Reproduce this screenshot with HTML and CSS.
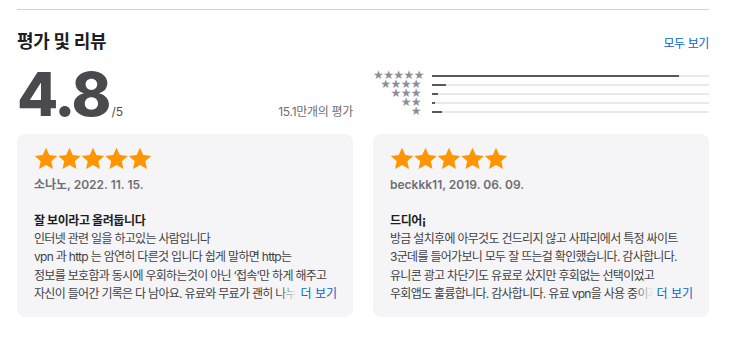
FILE: index.html
```html
<!DOCTYPE html>
<html>
<head>
	<title>평가 및 리뷰</title>
	<meta name="viewport" content="width=device-width">
	<link rel="stylesheet" href="styles.css">
</head>
<body>
	<section class="ratings">
		<div class="head">
			<h2>평가 및 리뷰</h2>
			<a class="all" href="#">모두 보기</a>
		</div>

		<div class="summary">
			<div class="score">
				<div class="avg"><span class="num">4.8</span><span class="of">/5</span></div>
				<div class="count">15.1만개의 평가</div>
			</div>
			<div class="hist">
				<div class="row"><span class="lbl">★★★★★</span><span class="bar"><i style="width:89%"></i></span></div>
				<div class="row"><span class="lbl">★★★★</span><span class="bar"><i style="width:5%"></i></span></div>
				<div class="row"><span class="lbl">★★★</span><span class="bar"><i style="width:2%"></i></span></div>
				<div class="row"><span class="lbl">★★</span><span class="bar"><i style="width:1%"></i></span></div>
				<div class="row"><span class="lbl">★</span><span class="bar"><i style="width:3.5%"></i></span></div>
			</div>
		</div>

		<div class="cards">
			<div class="card">
				<svg class="stars" width="118" height="24" viewBox="0 0 118 24">
					<defs>
						<path id="st" d="M12 0.8l3.3 7.3 7.9 0.8-5.9 5.3 1.7 7.8L12 18l-7 4 1.7-7.8L0.8 8.9l7.9-0.8z"/>
					</defs>
					<use href="#st" x="0"/><use href="#st" x="23.5"/><use href="#st" x="47"/><use href="#st" x="70.5"/><use href="#st" x="94"/>
				</svg>
				<div class="by">소나노, 2022. 11. 15.</div>
				<div class="title">잘 보이라고 올려둡니다</div>
				<div class="body">
					<div>인터넷 관련 일을 하고있는 사람입니다</div>
					<div>vpn 과 http 는 암연히 다른것 입니다 쉽게 말하면 http는</div>
					<div>정보를 보호함과 동시에 우회하는것이 아닌 ‘접속’만 하게 해주고</div>
					<div class="last">자신이 들어간 기록은 다 남아요. 유료와 무료가 괜히 나누어져 있는게 아니에요<a class="more" href="#">더 보기</a></div>
				</div>
			</div>
			<div class="card">
				<svg class="stars" width="118" height="24" viewBox="0 0 118 24">
					<use href="#st" x="0"/><use href="#st" x="23.5"/><use href="#st" x="47"/><use href="#st" x="70.5"/><use href="#st" x="94"/>
				</svg>
				<div class="by">beckkk11, 2019. 06. 09.</div>
				<div class="title">드디어¡</div>
				<div class="body">
					<div>방금 설치후에 아무것도 건드리지 않고 사파리에서 특정 싸이트</div>
					<div>3군데를 들어가보니 모두 잘 뜨는걸 확인했습니다. 감사합니다.</div>
					<div>유니콘 광고 차단기도 유료로 샀지만 후회없는 선택이었고</div>
					<div class="last">우회앱도 훌륭합니다. 감사합니다. 유료 vpn을 사용 중이지만 이 앱이 더 좋아요<a class="more" href="#">더 보기</a></div>
				</div>
			</div>
		</div>
	</section>
</body>
</html>
```

FILE: styles.css
```css
*{
	margin: 0;
	padding: 0;
	box-sizing: border-box;
}
body{
	font-family: "Inter", "Noto Sans CJK KR", sans-serif;
	color: #1d1d1f;
	background: #fff;
}
a{
	color: #0066cc;
	text-decoration: none;
}
.ratings{
	margin: 9px 32px 0 17px;
	border-top: 1px solid #d2d2d7;
}
.head{
	display: flex;
	justify-content: space-between;
	align-items: baseline;
	margin-top: 20px;
}
.head h2{
	font-size: 18px;
	line-height: 24px;
	font-weight: 700;
	letter-spacing: -0.3px;
}
.all{
	font-size: 12px;
	letter-spacing: -0.4px;
}
.summary{
	display: grid;
	grid-template-columns: minmax(0, 1fr) minmax(0, 1fr);
	column-gap: 20px;
	margin-top: 12px;
}
.score{
	display: flex;
	justify-content: space-between;
	align-items: baseline;
}
.num{
	font-size: 60px;
	line-height: 56px;
	font-weight: 800;
	letter-spacing: -2px;
	color: #4a4a4e;
}
.of{
	font-size: 12px;
	color: #4a4a4e;
	margin-left: 2px;
}
.count{
	font-size: 12px;
	color: #6e6e73;
	letter-spacing: -0.3px;
}
.hist{
	padding-top: 5px;
}
.row{
	display: flex;
	align-items: center;
	height: 9px;
}
.lbl{
	width: 48px;
	text-align: right;
	font-family: "DejaVu Sans", sans-serif;
	font-size: 12px;
	line-height: 9px;
	color: #8e8e93;
	letter-spacing: -0.6px;
}
.bar{
	flex: 1;
	height: 2px;
	margin-left: 11px;
	background: #e8e8ed;
}
.bar i{
	display: block;
	height: 100%;
	background: #58585c;
}
.cards{
	display: grid;
	grid-template-columns: minmax(0, 1fr) minmax(0, 1fr);
	column-gap: 20px;
	margin-top: 12px;
}
.card{
	background: #f5f5f7;
	border-radius: 8px;
	padding: 13px 16px 16px 17px;
	height: 183px;
	min-width: 0;
}
.stars{
	display: block;
	fill: #ff9500;
}
.by{
	margin-top: 5px;
	font-size: 12px;
	line-height: 18px;
	font-weight: 600;
	color: #6e6e73;
}
.title{
	margin-top: 18px;
	font-size: 12px;
	line-height: 18px;
	font-weight: 700;
	letter-spacing: -0.4px;
}
.body{
	font-size: 12px;
	line-height: 18.3px;
	color: #424245;
	letter-spacing: -0.7px;
	white-space: nowrap;
	overflow: hidden;
}
.last{
	position: relative;
	overflow: hidden;
}
.more{
	position: absolute;
	right: 0;
	top: 0;
	padding-left: 22px;
	letter-spacing: 0;
	background: linear-gradient(to right, rgba(245,245,247,0), #f5f5f7 18px);
}
```
